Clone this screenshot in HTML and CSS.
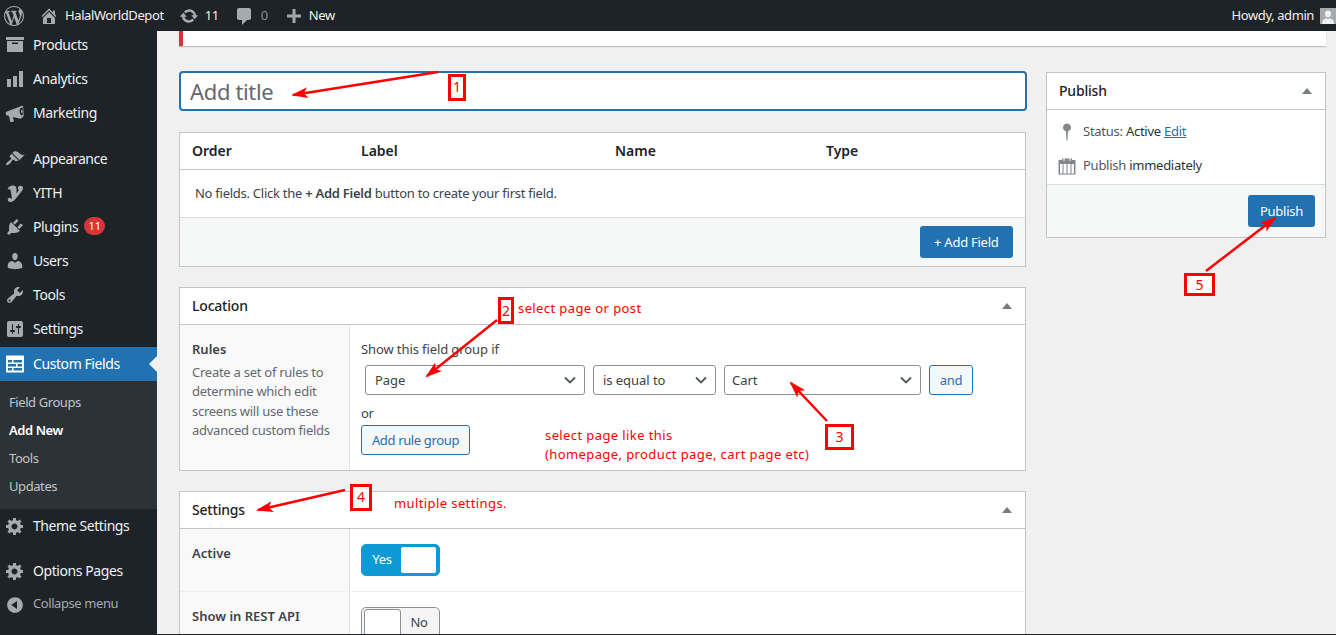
FILE: index.html
```html
<!DOCTYPE html>
<html lang="en">
<head>
    <meta charset="UTF-8">
    <title>Add New Field Group</title>
    <link rel="stylesheet" href="styles.css">
</head>
<body>
<div class="page">
    <header class="adminbar">
        <svg class="bar-logo" viewBox="0 0 20 20"><path d="M20 10c0-5.51-4.49-10-10-10C4.48 0 0 4.49 0 10c0 5.52 4.48 10 10 10 5.51 0 10-4.48 10-10zM7.78 15.37L4.37 6.22c.55-.02 1.17-.08 1.17-.08.5-.06.44-1.13-.06-1.11 0 0-1.45.11-2.37.11-.18 0-.37 0-.58-.01C4.12 2.69 6.87 1.11 10 1.11c2.33 0 4.45.87 6.05 2.34-.68-.11-1.65.39-1.65 1.58 0 .74.45 1.36.9 2.1.35.61.55 1.36.55 2.46 0 1.49-1.4 5-1.4 5l-3.03-8.37c.54-.02.82-.17.82-.17.5-.05.44-1.25-.06-1.22 0 0-1.44.12-2.38.12-.87 0-2.33-.12-2.33-.12-.5-.03-.56 1.2-.06 1.22l.92.08 1.26 3.41zM17.41 10c.24-.64.74-1.87.43-4.25.7 1.29 1.05 2.71 1.05 4.25 0 3.29-1.73 6.24-4.4 7.78.97-2.59 1.94-5.2 2.92-7.78zM6.1 18.09C3.12 16.65 1.11 13.53 1.11 10c0-1.3.23-2.48.72-3.59C3.25 10.3 4.67 14.2 6.1 18.09zm4.03-6.63l2.58 6.98c-.86.29-1.76.45-2.71.45-.79 0-1.57-.11-2.29-.33.81-2.38 1.62-4.74 2.42-7.1z"/></svg>
        <div class="bar-item site">
            <svg viewBox="0 0 20 20"><path d="M16 8.5l1.53 1.53-1.06 1.06L10 4.62l-6.47 6.47-1.06-1.06L10 2.5l4 4v-2h2v4zm-6-2.46l6 5.99V18H4v-5.97zM12 17v-5H8v5h4z"/></svg>
            <span>HalalWorldDepot</span>
        </div>
        <div class="bar-item updates">
            <svg viewBox="0 0 20 20"><path d="M10.2 3.28c3.53 0 6.43 2.61 6.92 6h2.08l-3.5 4-3.5-4h2.32c-.45-1.97-2.21-3.45-4.32-3.45-1.45 0-2.73.71-3.54 1.78L4.95 5.66C6.23 4.2 8.11 3.28 10.2 3.28zm-.4 13.44c-3.52 0-6.43-2.61-6.92-6H.8l3.5-4c1.17 1.33 2.33 2.67 3.5 4H5.48c.45 1.97 2.21 3.45 4.32 3.45 1.45 0 2.73-.71 3.54-1.78l1.71 1.95c-1.28 1.46-3.15 2.38-5.25 2.38z"/></svg>
            <span>11</span>
        </div>
        <div class="bar-item comments">
            <svg viewBox="0 0 20 20"><path d="M5 2h10c1.1 0 2 .9 2 2v8c0 1.1-.9 2-2 2h-2l-5 5v-5H5c-1.1 0-2-.9-2-2V4c0-1.1.9-2 2-2z"/></svg>
            <span>0</span>
        </div>
        <div class="bar-item new">
            <svg viewBox="0 0 20 20"><path d="M17 8.5v3h-5.5V17h-3v-5.5H3v-3h5.5V3h3v5.5z"/></svg>
            <span>New</span>
        </div>
        <div class="howdy">
            <span>Howdy, admin</span>
            <svg class="avatar" viewBox="0 0 16 16"><rect width="16" height="16" fill="#a7aaad"/><path fill="#f0f0f1" d="M8 2.5c2 0 3 1.5 3 3.3 0 2-1.2 3.7-3 3.7S5 7.8 5 5.800c0-1.800 1-3.300 3-3.300zM2 16c0-3.500 2-5.200 4-5.800.6.5 1.200.8 2 .8s1.400-.3 2-.8c2 .6 4 2.300 4 5.800z"/></svg>
        </div>
    </header>

    <div class="layout">
        <nav class="sidebar">
            <ul class="menu">
                <li class="menu-item">
                    <svg viewBox="0 0 20 20"><path d="M19 2v3H1V2h18zM2 6h16v11H2V6zm11 3V7.500H7V9h6z"/></svg>
                    <span>Products</span>
                </li>
                <li class="menu-item">
                    <svg viewBox="0 0 20 20"><path d="M18 18V2h-4v16h4zm-6 0V7H8v11h4zm-6 0v-8H2v8h4z"/></svg>
                    <span>Analytics</span>
                </li>
                <li class="menu-item sep-after">
                    <svg viewBox="0 0 20 20"><path d="M18.500 3.200c-1-.9-2.300-.6-3.300.2L2 8.500c-.8.3-1.200 1-1.200 1.800v.4c0 .8.500 1.500 1.300 1.700l1.900.6 1.100 5c.1.500.6.900 1.100.9h1.600c.7 0 1.200-.7 1-1.300l-1-3.500 6.600 1.500c1.100.3 2.300-.1 3.100-1 1.200-1.500 1.700-3.600 1.500-5.900-.2-2-.7-3.700-1.500-4.500zm-1.600 9c-1.100 0-2.100-1.600-2.300-3.700-.2-2 .6-3.800 1.700-3.800s2.100 1.700 2.300 3.800c.2 2-.6 3.700-1.700 3.700zm.1-2c-.5 0-.9-.7-1-1.700-.1-.9.2-1.700.8-1.700.5 0 .9.700 1 1.700.1.900-.3 1.700-.8 1.700z"/></svg>
                    <span>Marketing</span>
                </li>
                <li class="menu-item">
                    <svg viewBox="0 0 20 20"><path d="M14.480 11.060L7.410 3.990l1.500-1.500c.5-.56 2.300-.47 3.510.32 1.210.8 1.430 1.280 2.910 2.100 1.180.64 2.450 1.260 4.450.85zm-.71.71L6.700 4.700 4.930 6.470c-.39.39-.39 1.020 0 1.410l1.060 1.060c.39.39.39 1.030 0 1.420-.6.6-1.430 1.110-2.210 1.690-.35.26-.7.53-1.010.84C1.430 13.230.79 15.370 1 16s2.780-.43 4.130-1.780c.31-.31.58-.66.84-1.010.58-.78 1.090-1.610 1.690-2.210.39-.39 1.030-.39 1.420 0l1.060 1.060c.39.39 1.020.39 1.410 0z"/></svg>
                    <span>Appearance</span>
                </li>
                <li class="menu-item">
                    <svg viewBox="0 0 20 20"><path d="M2.500 6.500C3 4 5.500 2.500 8 2.500c2.500 0 3.500 1.500 3.500 4v4L14 7c-1.200-.5-1.500-2-.8-3.200.9-1.500 3.500-1.500 4.500 0 .8 1.300.2 3-1.200 4.800L10.500 16c-2 2.800-5 3.500-6.800 2.500-1.500-.9-1.200-3.500.8-3.700 1.500-.1 1.800 1.300 2.500 1.300L5.800 8c-.2-1.700-1.800-2.200-3.300-1.500z"/></svg>
                    <span>YITH</span>
                </li>
                <li class="menu-item">
                    <svg viewBox="0 0 20 20"><path d="M13.110 4.360L9.870 7.600 8 5.730l3.240-3.240c.35-.34 1.050-.2 1.560.32.52.51.66 1.210.31 1.550zm-8 1.770l.91-1.120 9.010 9.010-1.190.84c-.71.71-2.630 1.160-3.820 1.160H6.140L4.900 17.260c-.59.59-1.540.59-2.120 0-.59-.58-.59-1.530 0-2.120l1.240-1.240v-3.880c0-1.130.4-3.190 1.090-3.890zm7.260 3.970l3.240-3.240c.34-.35 1.040-.21 1.550.31.52.51.66 1.210.31 1.550l-3.240 3.250z"/></svg>
                    <span>Plugins</span>
                    <b class="badge">11</b>
                </li>
                <li class="menu-item">
                    <svg viewBox="0 0 20 20"><path d="M10 9.250c-2.270 0-2.730-3.440-2.730-3.440C7 4.020 7.820 2 9.970 2c2.160 0 2.980 2.020 2.710 3.810 0 0-.41 3.440-2.680 3.440zm0 2.570L12.720 10c2.390 0 4.520 2.330 4.520 4.530v2.490s-3.650 1.130-7.240 1.130c-3.650 0-7.240-1.130-7.240-1.130v-2.490c0-2.250 1.940-4.530 4.470-4.530z"/></svg>
                    <span>Users</span>
                </li>
                <li class="menu-item">
                    <svg viewBox="0 0 20 20"><path d="M16.680 9.770c-1.340 1.340-3.300 1.670-4.950.99l-5.410 6.520c-.99.99-2.590.99-3.580 0s-.99-2.590 0-3.570l6.520-5.420c-.68-1.650-.35-3.610.99-4.950 1.280-1.280 3.120-1.620 4.720-1.060l-2.890 2.890 2.820 2.820 2.860-2.870c.53 1.580.18 3.390-1.080 4.650zM3.810 16.210c.4.39 1.040.39 1.430 0 .4-.4.4-1.040 0-1.430-.39-.4-1.030-.4-1.430 0-.39.39-.39 1.030 0 1.430z"/></svg>
                    <span>Tools</span>
                </li>
                <li class="menu-item tall">
                    <svg viewBox="0 0 20 20"><path d="M18 16V4c0-1.100-.9-2-2-2H4c-1.100 0-2 .9-2 2v12c0 1.100.9 2 2 2h12c1.100 0 2-.9 2-2zM8 11h1c.55 0 1 .45 1 1s-.45 1-1 1H8v1.500c0 .28-.22.5-.5.5s-.5-.22-.5-.5V13H6c-.55 0-1-.45-1-1s.45-1 1-1h1V5.500c0-.28.22-.5.5-.5s.5.22.5.5V11zm5-2h-1c-.55 0-1-.45-1-1s.45-1 1-1h1V5.500c0-.28.22-.5.5-.5s.5.22.5.5V7h1c.55 0 1 .45 1 1s-.45 1-1 1h-1v5.500c0 .28-.22.5-.5.5s-.5-.22-.5-.5V9z"/></svg>
                    <span>Settings</span>
                </li>
                <li class="menu-item current">
                    <svg viewBox="0 0 20 20"><path fill-rule="evenodd" d="M2 1.500h16c.6 0 1 .4 1 1v15c0 .6-.4 1-1 1H2c-.6 0-1-.4-1-1v-15c0-.6.4-1 1-1zM3 6v2.500h4V6H3zm5.500 0v2.500H17V6H8.500zM3 10v2.500h8V10H3zm9.500 0v2.500H17V10h-4.500zM3 14v2.500h4V14H3zm5.500 0v2.500H17V14H8.500z"/></svg>
                    <span>Custom Fields</span>
                </li>
                <li class="submenu">
                    <a>Field Groups</a>
                    <a class="active">Add New</a>
                    <a>Tools</a>
                    <a>Updates</a>
                </li>
                <li class="menu-item sep-after">
                    <svg viewBox="0 0 20 20"><path d="M18 12h-2.180c-.17.7-.44 1.350-.81 1.930l1.540 1.540-2.100 2.100-1.540-1.540c-.58.36-1.230.63-1.910.79V19H8v-2.180c-.68-.16-1.330-.43-1.910-.79l-1.540 1.540-2.120-2.120 1.540-1.540c-.36-.58-.63-1.230-.79-1.910H1V9.030h2.170c.16-.7.44-1.350.8-1.940L2.430 5.550l2.100-2.100 1.540 1.540c.58-.37 1.240-.64 1.930-.81V2h3v2.180c.68.16 1.330.43 1.910.79l1.540-1.540 2.120 2.120-1.540 1.540c.36.59.64 1.240.8 1.940H18V12zm-8.500 1.500c1.660 0 3-1.340 3-3s-1.340-3-3-3-3 1.340-3 3 1.340 3 3 3z"/></svg>
                    <span>Theme Settings</span>
                </li>
                <li class="menu-item">
                    <svg viewBox="0 0 20 20"><path d="M18 12h-2.180c-.17.7-.44 1.350-.81 1.930l1.540 1.540-2.100 2.100-1.540-1.540c-.58.36-1.230.63-1.910.79V19H8v-2.180c-.68-.16-1.330-.43-1.910-.79l-1.540 1.540-2.120-2.120 1.540-1.540c-.36-.58-.63-1.230-.79-1.910H1V9.030h2.170c.16-.7.44-1.350.8-1.940L2.430 5.550l2.100-2.100 1.540 1.540c.58-.37 1.240-.64 1.930-.81V2h3v2.180c.68.16 1.330.43 1.910.79l1.540-1.540 2.120 2.120-1.540 1.540c.36.59.64 1.240.8 1.940H18V12zm-8.500 1.500c1.660 0 3-1.340 3-3s-1.340-3-3-3-3 1.340-3 3 1.340 3 3 3z"/></svg>
                    <span>Options Pages</span>
                </li>
                <li class="menu-item collapse">
                    <svg viewBox="0 0 20 20"><path d="M10 2.160c4.330 0 7.840 3.510 7.840 7.840s-3.510 7.840-7.840 7.840S2.160 14.330 2.160 10 5.710 2.160 10 2.160zm2 11.720V6.120L6.180 9.970z"/></svg>
                    <span>Collapse menu</span>
                </li>
            </ul>
        </nav>

        <main class="content">
            <div class="notice"></div>
            <div class="columns">
                <div class="col-main">
                    <div class="title-box">Add title</div>

                    <section class="box">
                        <div class="field-head">
                            <span>Order</span>
                            <span>Label</span>
                            <span>Name</span>
                            <span>Type</span>
                        </div>
                        <p class="no-fields">No fields. Click the <strong>+ Add Field</strong> button to create your first field.</p>
                        <div class="box-foot">
                            <a class="btn-primary">+ Add Field</a>
                        </div>
                    </section>

                    <section class="box">
                        <div class="box-head">
                            <h2>Location</h2>
                            <i class="caret"></i>
                        </div>
                        <div class="row">
                            <div class="row-label">
                                <strong>Rules</strong>
                                <p>Create a set of rules to determine which edit screens will use these advanced custom fields</p>
                            </div>
                            <div class="row-value rules">
                                <div class="rules-title">Show this field group if</div>
                                <div class="rule-line">
                                    <div class="select sel-param">Page<svg viewBox="0 0 12 8"><path d="M1 1.500l5 5 5-5"/></svg></div>
                                    <div class="select sel-op">is equal to<svg viewBox="0 0 12 8"><path d="M1 1.500l5 5 5-5"/></svg></div>
                                    <div class="select sel-val">Cart<svg viewBox="0 0 12 8"><path d="M1 1.500l5 5 5-5"/></svg></div>
                                    <a class="btn-outline">and</a>
                                </div>
                                <div class="rules-or">or</div>
                                <a class="btn-outline add-group">Add rule group</a>
                            </div>
                        </div>
                    </section>

                    <section class="box last">
                        <div class="box-head">
                            <h2>Settings</h2>
                            <i class="caret"></i>
                        </div>
                        <div class="row row-active">
                            <div class="row-label"><strong>Active</strong></div>
                            <div class="row-value">
                                <div class="toggle on"><span>Yes</span><i></i></div>
                            </div>
                        </div>
                        <div class="row row-rest">
                            <div class="row-label"><strong>Show in REST API</strong></div>
                            <div class="row-value">
                                <div class="toggle"><i></i><span>No</span></div>
                            </div>
                        </div>
                    </section>
                </div>

                <aside class="col-side">
                    <section class="box publish">
                        <div class="box-head">
                            <h2>Publish</h2>
                            <i class="caret"></i>
                        </div>
                        <div class="pub-line status">
                            <svg viewBox="0 0 20 20"><path d="M10 1.500c2.200 0 4 1.800 4 4s-1.800 4-4 4-4-1.800-4-4 1.800-4 4-4zM9 9h2l-.5 9.500h-1z"/></svg>
                            <span>Status: <b>Active</b> <a>Edit</a></span>
                        </div>
                        <div class="pub-line time">
                            <svg viewBox="0 0 20 20"><path fill-rule="evenodd" d="M5 2.500h1.500V5h1V2.500H12.500V5h1V2.500H15V4h3.500v14.500h-17V4H5zM3 8v9.500h2.500V8zm3.500 0v9.500h3V8zm4 0v9.500h3V8zm4 0v9.500H17V8z"/></svg>
                            <span>Publish <b>immediately</b></span>
                        </div>
                        <div class="box-foot">
                            <a class="btn-primary">Publish</a>
                        </div>
                    </section>
                </aside>
            </div>
        </main>
    </div>

    <!-- red notes drawn on top of the screenshot -->
    <svg class="arrows" viewBox="0 0 1336 635">
        <defs>
            <marker id="head" markerUnits="userSpaceOnUse" markerWidth="18" markerHeight="12" refX="15" refY="6" orient="auto">
                <path d="M17 6L0 .5 4 6 0 11.500z" fill="#f00"/>
            </marker>
        </defs>
        <line x1="438" y1="72" x2="293" y2="95" marker-end="url(#head)"/>
        <line x1="497" y1="320" x2="427" y2="376" marker-end="url(#head)"/>
        <line x1="827" y1="421" x2="791" y2="383" marker-end="url(#head)"/>
        <line x1="345" y1="490" x2="258" y2="510" marker-end="url(#head)"/>
        <line x1="1206" y1="271" x2="1275" y2="218" marker-end="url(#head)"/>
    </svg>
    <span class="num n1">1</span>
    <span class="num n2">2</span>
    <span class="num n3">3</span>
    <span class="num n4">4</span>
    <span class="num n5">5</span>
    <span class="note t1">select page or post</span>
    <span class="note t2">select page like this<br>(homepage, product page, cart page etc)</span>
    <span class="note t3">multiple settings.</span>
</div>
</body>
</html>
```

FILE: styles.css
```css
html, body{
    margin: 0;
    padding: 0;
    width: 100%;
    height: 100%;
    overflow: hidden;
}

body{
    font-family: "Noto Sans", "Open Sans", sans-serif;
    font-size: 13px;
    line-height: 1.5;
    letter-spacing: -0.26px;
    color: #3c434a;
    background: #f0f0f1;
}

svg{
    display: block;
    fill: currentColor;
}

ul, p, h2{
    margin: 0;
    padding: 0;
}

.page{
    position: relative;
    width: 1336px;
    height: 635px;
    display: flex;
    flex-direction: column;
    overflow: hidden;
    box-sizing: border-box;
    border-bottom: 1px solid #1d2327;
}

/* top bar */
.adminbar{
    flex: none;
    height: 31px;
    display: flex;
    align-items: center;
    background: #1d2327;
    color: #f0f0f1;
    letter-spacing: -0.4px;
}

.bar-logo{
    width: 20px;
    height: 20px;
    margin-left: 4px;
    color: #a7aaad;
}

.bar-item{
    display: flex;
    align-items: center;
}

.bar-item svg{
    width: 20px;
    height: 20px;
    color: #a7aaad;
}

.site{ margin-left: 15px; gap: 6px; }
.updates{ margin-left: 15px; gap: 6px; }
.comments{ margin-left: 15px; gap: 7px; }
.comments span{ color: #8c8f94; }
.new{ margin-left: 16px; gap: 5px; }

.howdy{
    margin-left: auto;
    display: flex;
    align-items: center;
    gap: 6px;
}

.avatar{
    width: 16px;
    height: 16px;
}

.layout{
    flex: 1;
    min-height: 0;
    display: flex;
}

/* side menu */
.sidebar{
    flex: none;
    width: 157px;
    background: #1d2327;
    overflow: hidden;
    color: #f0f0f1;
    letter-spacing: -0.42px;
}

.menu{
    list-style: none;
    margin-top: -3px;
}

.menu-item{
    height: 34px;
    box-sizing: border-box;
    display: flex;
    align-items: center;
    font-size: 14px;
    padding-left: 33px;
    padding-bottom: 2px;
    position: relative;
}

.menu-item svg{
    position: absolute;
    left: 5px;
    top: 7px;
    width: 20px;
    height: 20px;
    color: #a7aaad;
}

.menu-item.tall{ height: 35px; }
.sep-after{ margin-bottom: 12px; }
.submenu + .sep-after{ margin-bottom: 11px; }

.menu-item.current{
    background: #2271b1;
    color: #fff;
}

.menu-item.current svg{ color: #fff; }

.menu-item.current::after{
    content: "";
    position: absolute;
    right: 0;
    top: 9px;
    border: 8px solid transparent;
    border-right-color: #f0f0f1;
    border-left-width: 0;
}

.collapse{ color: #a7aaad; font-size: 13px; }

.badge{
    margin-left: 6px;
    min-width: 21px;
    height: 18px;
    line-height: 18px;
    border-radius: 9px;
    background: #d63638;
    color: #fff;
    font-size: 11px;
    font-weight: 400;
    text-align: center;
    letter-spacing: 0;
}

.submenu{
    background: #2c3338;
    padding: 7px 0 9px;
}

.submenu a{
    display: block;
    height: 28px;
    line-height: 28px;
    padding-left: 9px;
    color: #c3c4c7;
}

.submenu a.active{
    color: #fff;
    font-weight: 600;
}

/* content */
.content{
    flex: 1;
    min-width: 0;
    padding-left: 22px;
    padding-right: 10px;
    overflow: hidden;
}

.notice{
    height: 15px;
    background: #fff;
    border-left: 4px solid #d63638;
    box-shadow: 0 1px 1px rgba(0, 0, 0, 0.2);
    margin-bottom: 25px;
}

.columns{
    display: flex;
    align-items: flex-start;
    gap: 19px;
}

.col-main{
    flex: none;
    width: 848px;
}

.col-main .box{ margin-right: 1px; }

.col-side{
    flex: none;
    width: 280px;
    padding-top: 1px;
}

.title-box{
    height: 36px;
    line-height: 36px;
    border: 2px solid #2271b1;
    border-radius: 4px;
    background: #fff;
    padding-left: 9px;
    font-size: 22px;
    letter-spacing: -0.35px;
    color: #646970;
    margin-bottom: 21px;
}

.box{
    background: #fff;
    border: 1px solid #c3c4c7;
    margin-bottom: 20px;
    box-sizing: border-box;
}

.box.last{ margin-bottom: 0; }

.field-head{
    height: 36px;
    display: grid;
    grid-template-columns: 169px 254px 211px 1fr;
    align-items: center;
    padding-left: 12px;
    border-bottom: 1px solid #c3c4c7;
    font-size: 14px;
    font-weight: 600;
    letter-spacing: 0;
    color: #1d2327;
}

.field-head span{ position: relative; top: -1px; }

.no-fields{
    height: 47px;
    line-height: 47px;
    padding-left: 15px;
}

.no-fields strong{ font-weight: 600; }

.box-foot{
    display: flex;
    justify-content: flex-end;
    background: #f6f7f7;
    border-top: 1px solid #dcdcde;
    padding: 8px 12px 8px;
}

.btn-primary{
    height: 32px;
    line-height: 32px;
    padding: 0 14.5px;
    border-radius: 3px;
    background: #2271b1;
    color: #fff;
}

.box-head{
    height: 36px;
    display: flex;
    align-items: center;
    justify-content: space-between;
    padding: 0 12px;
    border-bottom: 1px solid #c3c4c7;
}

.box-head h2{
    font-size: 14px;
    font-weight: 500;
    letter-spacing: -0.2px;
    color: #1d2327;
    padding-bottom: 2px;
}

.caret{
    width: 0;
    height: 0;
    border: 5px solid transparent;
    border-top-width: 0;
    border-bottom: 6px solid #787c82;
    margin-right: 1px;
}

.row{
    display: grid;
    grid-template-columns: 170px 1fr;
}

.row-label{
    background: #f9f9f9;
    border-right: 1px solid #e1e1e1;
    padding: 15px 12px 0;
    line-height: 19.5px;
}

.row-label strong{
    font-weight: 600;
    display: block;
    margin-bottom: 3px;
    letter-spacing: 0;
}

.row-label p{ color: #646970; }

.rules{
    padding: 15px 11px 15px;
    height: 145px;
    box-sizing: border-box;
}

.row-value{ padding-left: 11px; }

.rules-title{
    line-height: 19px;
    margin-bottom: 6px;
    letter-spacing: -0.1px;
}

.rule-line{
    display: flex;
    gap: 8px;
    padding-left: 4px;
}

.select{
    height: 30px;
    line-height: 28px;
    box-sizing: border-box;
    border: 1px solid #8c8f94;
    border-radius: 3px;
    background: #fff;
    padding-left: 9px;
    position: relative;
    letter-spacing: -0.05px;
}

.select svg{
    position: absolute;
    right: 8px;
    top: 10px;
    width: 12px;
    height: 8px;
    fill: none;
    stroke: #50575e;
    stroke-width: 1.8;
}

.sel-param{ width: 220px; }
.sel-op{ width: 123px; }
.sel-val{ width: 197px; padding-left: 7px; }

.btn-outline{
    display: block;
    height: 30px;
    line-height: 28px;
    box-sizing: border-box;
    border: 1px solid #2271b1;
    border-radius: 3px;
    background: #f6f7f7;
    color: #2271b1;
    width: 44px;
    text-align: center;
}

.rules-or{
    margin-top: 8px;
    line-height: 20px;
    margin-bottom: 2px;
}

.add-group{ width: 109px; letter-spacing: -0.35px; }

.row-active{ height: 62px; border-bottom: 1px solid #eee; }
.row-rest{ height: 62px; }

.row-active .row-value,
.row-rest .row-value{ padding-top: 15px; }

.toggle{
    width: 79px;
    height: 32px;
    box-sizing: border-box;
    border-radius: 5px;
    border: 1px solid #8c8f94;
    background: #f5f5f5;
    display: flex;
    align-items: center;
    justify-content: space-between;
    padding: 0 2px;
}

.toggle i{
    width: 35px;
    height: 26px;
    background: #fff;
    border: 1px solid #8c8f94;
    border-radius: 3px;
}

.toggle span{ flex: 1; text-align: center; }

.toggle.on{
    background: #0c99d5;
    border-color: #0c99d5;
    color: #fff;
}

.toggle.on i{ border-color: #0c99d5; }

/* publish box */
.pub-line{
    display: flex;
    align-items: center;
    padding-left: 10px;
    gap: 6px;
    color: #50575e;
}

.pub-line svg{
    width: 20px;
    height: 20px;
    color: #82878c;
}

.pub-line b{ font-weight: 400; color: #2c3338; }
.pub-line a{ color: #2271b1; text-decoration: underline; }

.status{ margin-top: 12px; }
.time{ margin-top: 14px; margin-bottom: 8px; }

.publish .box-foot{ padding: 10px 10px 10px; }
.publish .btn-primary{ padding: 0 12px; }

/* annotations */
.arrows{
    position: absolute;
    left: 0;
    top: 0;
    width: 1336px;
    height: 635px;
    pointer-events: none;
}

.arrows line{
    stroke: #f00;
    stroke-width: 2.5;
}

.num{
    position: absolute;
    box-sizing: border-box;
    border: 3px solid #f00;
    color: #f00;
    background: #fff;
    text-align: center;
    font-size: 14px;
    letter-spacing: 0;
}

.n1{ left: 448px; top: 74px; width: 18px; height: 27px; line-height: 20px; }
.n2{ left: 498px; top: 297px; width: 16px; height: 27px; line-height: 22px; }
.n3{ left: 825px; top: 424px; width: 29px; height: 26px; line-height: 20px; }
.n4{ left: 350px; top: 484px; width: 22px; height: 27px; line-height: 19px; }
.n5{ left: 1184px; top: 273px; width: 31px; height: 23px; line-height: 18px; }

.note{
    position: absolute;
    color: #f00;
    font-size: 13px;
    line-height: 19px;
    letter-spacing: 0.4px;
    white-space: nowrap;
}

.t1{ left: 518px; top: 299px; }
.t2{ left: 545px; top: 426px; }
.t3{ left: 394px; top: 494px; }
```
